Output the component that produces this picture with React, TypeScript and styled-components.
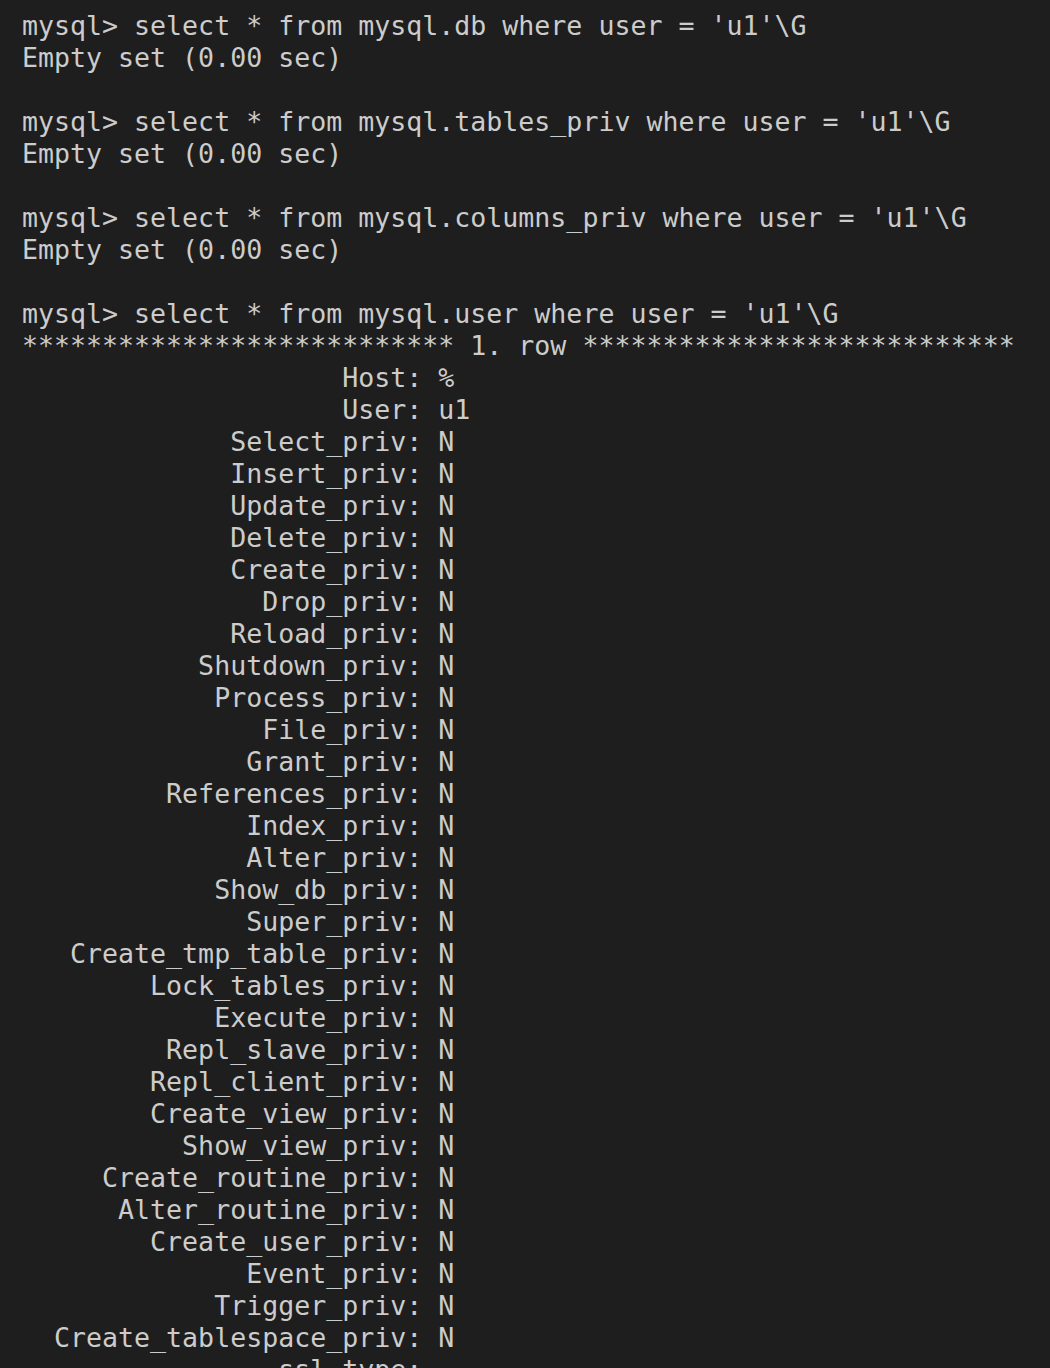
import React from "react";
import styled, { createGlobalStyle } from "styled-components";

const Global = createGlobalStyle`
  html, body {
    margin: 0;
    padding: 0;
    background: #1e1e1e;
  }
`;

const Terminal = styled.div`
  width: 1050px;
  height: 1368px;
  overflow: hidden;
  box-sizing: border-box;
  padding: 10px 0 0 22px;
  background: #1e1e1e;
  color: #cccccc;
  font-family: "DejaVu Sans Mono", "Liberation Mono", monospace;
  font-size: 26.6px;
  line-height: 32px;
`;

const Line = styled.div`
  white-space: pre;
  height: 32px;
`;

const fields: [string, string][] = [
  ["Host", "%"],
  ["User", "u1"],
  ["Select_priv", "N"],
  ["Insert_priv", "N"],
  ["Update_priv", "N"],
  ["Delete_priv", "N"],
  ["Create_priv", "N"],
  ["Drop_priv", "N"],
  ["Reload_priv", "N"],
  ["Shutdown_priv", "N"],
  ["Process_priv", "N"],
  ["File_priv", "N"],
  ["Grant_priv", "N"],
  ["References_priv", "N"],
  ["Index_priv", "N"],
  ["Alter_priv", "N"],
  ["Show_db_priv", "N"],
  ["Super_priv", "N"],
  ["Create_tmp_table_priv", "N"],
  ["Lock_tables_priv", "N"],
  ["Execute_priv", "N"],
  ["Repl_slave_priv", "N"],
  ["Repl_client_priv", "N"],
  ["Create_view_priv", "N"],
  ["Show_view_priv", "N"],
  ["Create_routine_priv", "N"],
  ["Alter_routine_priv", "N"],
  ["Create_user_priv", "N"],
  ["Event_priv", "N"],
  ["Trigger_priv", "N"],
  ["Create_tablespace_priv", "N"],
  ["ssl_type", ""],
];

const stars = "*".repeat(27);

const lines: string[] = [
  "mysql> select * from mysql.db where user = 'u1'\\G",
  "Empty set (0.00 sec)",
  "",
  "mysql> select * from mysql.tables_priv where user = 'u1'\\G",
  "Empty set (0.00 sec)",
  "",
  "mysql> select * from mysql.columns_priv where user = 'u1'\\G",
  "Empty set (0.00 sec)",
  "",
  "mysql> select * from mysql.user where user = 'u1'\\G",
  `${stars} 1. row ${stars}`,
  ...fields.map(([k, v]) => `${k.padStart(24, " ")}: ${v}`),
];

export default function App() {
  return (
    <>
      <Global />
      <Terminal>
        {lines.map((l, i) => (
          <Line key={i}>{l}</Line>
        ))}
      </Terminal>
    </>
  );
}
